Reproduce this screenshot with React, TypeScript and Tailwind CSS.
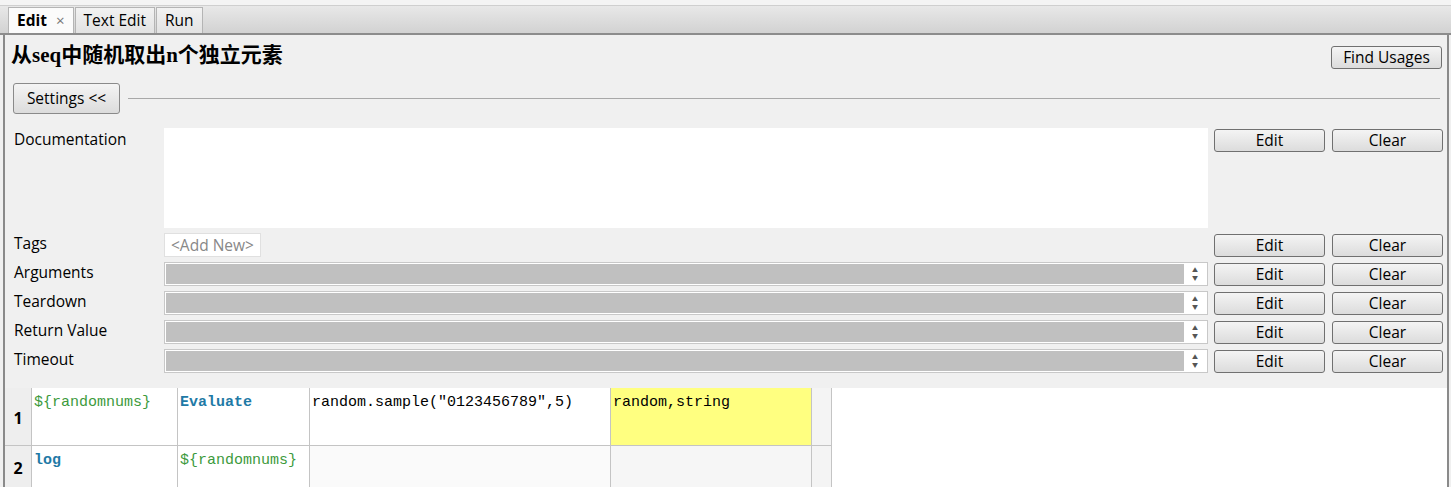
import React from "react";

const ui = "font-['Segoe_UI','Open_Sans','Noto_Sans','Noto_Sans_CJK_SC',sans-serif]";
const mono = "font-['Liberation_Mono','Noto_Sans_CJK_SC',monospace]";

function Btn({ label, w = "w-[111px]" }: { label: string; w?: string }) {
  return (
    <button
      className={`${w} h-[23px] shrink-0 rounded-[3px] border border-[#707070] bg-gradient-to-b from-[#f4f4f4] to-[#dcdcdc] text-[15.5px] leading-[21px] text-black`}
    >
      {label}
    </button>
  );
}

function Buttons() {
  return (
    <div className="ml-[6px] mt-[1px] flex gap-[7px]">
      <Btn label="Edit" />
      <Btn label="Clear" />
    </div>
  );
}

function Spinner() {
  return (
    <div className="flex h-full w-[22px] shrink-0 flex-col items-center justify-center gap-[1px] text-[6px] leading-[7px] text-[#555]">
      <span>▲</span>
      <span>▼</span>
    </div>
  );
}

function FieldRow({ label }: { label: string }) {
  return (
    <div className="flex h-[29px] items-start">
      <div className="w-[150px] shrink-0 text-[15.5px] leading-[21px]">{label}</div>
      <div className="flex h-[24px] w-[1044px] shrink-0 border border-[#c8c8c8] bg-white p-[1px]">
        <div className="h-full flex-1 bg-[#c0c0c0]" />
        <Spinner />
      </div>
      <Buttons />
    </div>
  );
}

function Tab({ label, active }: { label: string; active?: boolean }) {
  return (
    <div
      className={`flex h-[26px] items-center border border-b-0 border-[#b4b4b4] px-[8px] text-[15.5px] ${
        active ? "bg-[#fbfbfb] font-bold" : "bg-gradient-to-b from-[#f2f2f2] to-[#e2e2e2]"
      }`}
    >
      {label}
      {active && <span className="ml-[9px] text-[15px] font-normal text-[#777]">×</span>}
    </div>
  );
}

function Cell({ w, children, className = "" }: { w: string; children?: React.ReactNode; className?: string }) {
  return (
    <div className={`${w} shrink-0 border-r border-b border-[#c4c4c4] px-[2px] pt-[5px] text-[15px] leading-[20px] ${mono} ${className}`}>
      {children}
    </div>
  );
}

export default function App() {
  return (
    <div className={`h-[487px] w-[1451px] overflow-hidden bg-[#f0f0f0] text-black ${ui}`}>
      {/* tab bar */}
      <div className="h-[6px] border-b border-[#cfcfcf] bg-[#f4f4f4]" />
      <div className="flex h-[29px] items-end gap-[1px] border-b-2 border-[#8c8c8c] bg-gradient-to-b from-[#e8e8e8] to-[#d2d2d2] pl-[8px]">
        <Tab label="Edit" active />
        <Tab label="Text Edit" />
        <Tab label="Run" />
      </div>

      <div className="ml-[3px] mr-[2px] flex h-[452px] flex-col border-x-2 border-[#8a8a8a]">
        {/* settings area */}
        <div className="flex flex-col pl-[9px] pr-[5px]">
          <div className="flex h-[48px] items-start justify-between">
            <div className="-ml-[3px] mt-[6px] font-['Liberation_Serif','Noto_Sans_CJK_SC',serif] text-[21px] font-bold leading-[28px]">
              从seq中随机取出n个独立元素
            </div>
            <div className="mt-[10px]">
              <Btn label="Find Usages" />
            </div>
          </div>
          <div className="-ml-[1px] flex h-[31px] items-center gap-[8px]">
            <button className="h-[31px] w-[107px] shrink-0 rounded-[3px] border border-[#8a8a8a] bg-gradient-to-b from-[#f4f4f4] to-[#dcdcdc] text-[15.5px]">
              Settings &lt;&lt;
            </button>
            <div className="mr-[2px] h-[1px] flex-1 bg-[#a8a8a8]" />
          </div>
          <div className="mt-[14px] flex h-[105px] items-start">
            <div className="w-[150px] shrink-0 pt-[1px] text-[15.5px] leading-[21px]">Documentation</div>
            <div className="h-[100px] w-[1044px] shrink-0 bg-white" />
            <Buttons />
          </div>
          <div className="flex h-[29px] items-start">
            <div className="w-[150px] shrink-0 text-[15.5px] leading-[21px]">Tags</div>
            <div className="flex w-[1044px] shrink-0">
              <div className="h-[24px] border border-[#e0e0e0] bg-white px-[6px] text-[15.5px] leading-[22px] text-[#888]">
                &lt;Add New&gt;
              </div>
            </div>
            <Buttons />
          </div>
          <FieldRow label="Arguments" />
          <FieldRow label="Teardown" />
          <FieldRow label="Return Value" />
          <FieldRow label="Timeout" />
        </div>

        {/* grid */}
        <div className="mt-[10px] flex flex-1 bg-white">
          <div className="flex w-[827px] shrink-0 flex-col">
            <div className="flex h-[58px]">
              <div className="flex w-[27px] shrink-0 items-center justify-center border-r border-b border-[#c4c4c4] bg-[#eeeeee] pt-[3px] text-[16px] font-bold">
                1
              </div>
              <Cell w="w-[146px]" className="text-[#3c9a3c]">
                {"${randomnums}"}
              </Cell>
              <Cell w="w-[132px]" className="font-bold text-[#1f7aa6]">
                Evaluate
              </Cell>
              <Cell w="w-[301px]">random.sample("0123456789",5)</Cell>
              <Cell w="w-[201px]" className="bg-[#ffff80]">
                random,string
              </Cell>
              <Cell w="w-[20px]" className="bg-[#f4f4f4]" />
            </div>
            <div className="flex flex-1">
              <div className="flex w-[27px] shrink-0 items-center justify-center border-r border-[#c4c4c4] bg-[#eeeeee] pt-[3px] text-[16px] font-bold">
                2
              </div>
              <Cell w="w-[146px]" className="border-b-0 font-bold text-[#1f7aa6]">
                log
              </Cell>
              <Cell w="w-[132px]" className="border-b-0 text-[#3c9a3c]">
                {"${randomnums}"}
              </Cell>
              <Cell w="w-[301px]" className="border-b-0 bg-[#fafafa]" />
              <Cell w="w-[201px]" className="border-b-0 bg-[#f6f6f6]" />
              <Cell w="w-[20px]" className="border-b-0 bg-[#f4f4f4]" />
            </div>
          </div>
          <div className="flex-1 bg-white" />
        </div>
      </div>
    </div>
  );
}
